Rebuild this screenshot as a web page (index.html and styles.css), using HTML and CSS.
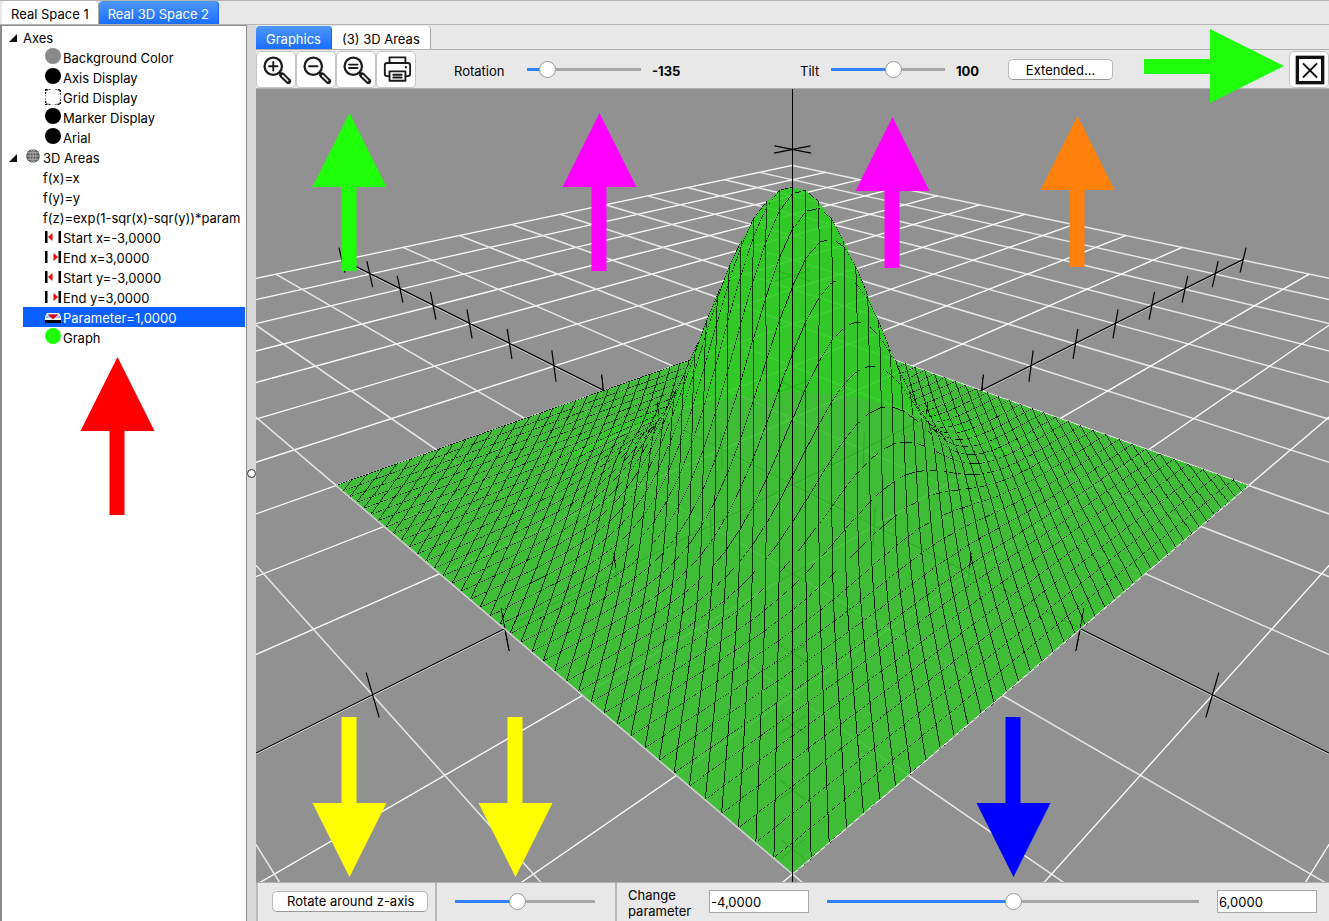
FILE: index.html
```html
<!DOCTYPE html>
<html lang="en">
<head>
<meta charset="utf-8">
<title>Real 3D Space 2</title>
<link rel="stylesheet" href="styles.css">
</head>
<body>
<div class="app">
  <nav class="tabs tabs-main">
    <button class="tab" type="button">Real Space 1</button>
    <button class="tab tab-active" type="button">Real 3D Space 2</button>
  </nav>
  <div class="workspace">
    <aside class="sidebar">
      <ul class="tree">
        <li class="row row-root"><span class="twist"></span>Axes</li>
        <li class="row row-item"><span class="dot dot-gray"></span>Background Color</li>
        <li class="row row-item"><span class="dot"></span>Axis Display</li>
        <li class="row row-item"><svg class="mark" viewBox="0 0 16 16"><rect x=".7" y=".7" width="14.600" height="14.600" fill="none" stroke="#000" stroke-width="1.400" stroke-dasharray="2 1"/><circle cx="8" cy="8" r="7.900" fill="#fff"/></svg>Grid Display</li>
        <li class="row row-item"><span class="dot"></span>Marker Display</li>
        <li class="row row-item"><span class="dot"></span>Arial</li>
        <li class="row row-root"><span class="twist"></span><svg class="globe" viewBox="0 0 14 14"><circle cx="7" cy="7" r="6.800" fill="#555"/><g fill="none" stroke="#bbb" stroke-width=".9"><ellipse cx="7" cy="7" rx="3" ry="6.500"/><path d="M7 0v14M.5 7h13M1.500 3.800h11M1.500 10.200h11"/></g></svg>3D Areas</li>
        <li class="row row-func">f(x)=x</li>
        <li class="row row-func">f(y)=y</li>
        <li class="row row-func">f(z)=exp(1-sqr(x)-sqr(y))*param</li>
        <li class="row row-item"><svg class="mark" viewBox="0 0 16 16"><path d="M0 2h2.500v12H0zM13.500 2H16v12h-2.500z"/><path d="M3 8l4.500-4v8z" fill="#f00"/></svg>Start x=-3,0000</li>
        <li class="row row-item"><svg class="mark" viewBox="0 0 16 16"><path d="M0 2h2.500v12H0zM13.500 2H16v12h-2.500z"/><path d="M13 8L8.500 4v8z" fill="#f00"/></svg>End x=3,0000</li>
        <li class="row row-item"><svg class="mark" viewBox="0 0 16 16"><path d="M0 2h2.500v12H0zM13.500 2H16v12h-2.500z"/><path d="M3 8l4.500-4v8z" fill="#f00"/></svg>Start y=-3,0000</li>
        <li class="row row-item"><svg class="mark" viewBox="0 0 16 16"><path d="M0 2h2.500v12H0zM13.500 2H16v12h-2.500z"/><path d="M13 8L8.500 4v8z" fill="#f00"/></svg>End y=3,0000</li>
        <li class="row row-item row-selected"><svg class="mark" viewBox="0 0 16 16"><path d="M2 4h12l2 4v2H0V8z" fill="#fff"/><path d="M1 8h14M2.500 6h11" stroke="#0a60ff" stroke-width=".8"/><path d="M3 5.500h10L8 10.500z" fill="#e00010"/><path d="M0 11h16v3H0z"/><path d="M0 10.500h16" stroke="#fff"/></svg>Parameter=1,0000</li>
        <li class="row row-item"><span class="dot dot-green"></span>Graph</li>
      </ul>
    </aside>
    <div class="splitter"><span class="grip"></span></div>
    <main class="view">
      <nav class="tabs tabs-view">
        <button class="tab tab-active" type="button">Graphics</button>
        <button class="tab" type="button">(3) 3D Areas</button>
      </nav>
      <div class="toolbar">
        <div class="tools">
          <button class="tool" type="button" aria-label="Zoom in"><svg viewBox="0 0 32 32"><use href="#lens"/><path d="M7.500 12h9M12 7.500v9" class="ink"/></svg></button>
          <button class="tool" type="button" aria-label="Zoom out"><svg viewBox="0 0 32 32"><use href="#lens"/><path d="M7.500 12h9" class="ink"/></svg></button>
          <button class="tool" type="button" aria-label="Reset zoom"><svg viewBox="0 0 32 32"><use href="#lens"/><path d="M7.500 10.200h9M7.500 13.800h9" class="ink"/></svg></button>
          <button class="tool" type="button" aria-label="Print"><svg viewBox="0 0 32 32"><g class="ink"><path d="M8 8.500V2.500h17v6M8 22.500H5.500q-2.500 0-2.500-2.500V11q0-2.500 2.500-2.500h22Q30 8.500 30 11v9q0 2.500-2.500 2.500H25"/><path d="M8 17.500h17v10H8zM12 21h9M12 24h9"/></g><circle cx="25.500" cy="13" r="1.200"/></svg></button>
        </div>
        <label class="field field-rotation" for="rotation">Rotation</label>
        <input class="slider slider-small" id="rotation" type="range" min="-180" max="180" value="-135" style="--fill:17%">
        <output class="value value-rotation" for="rotation">-135</output>
        <label class="field field-tilt" for="tilt">Tilt</label>
        <input class="slider slider-small" id="tilt" type="range" min="0" max="180" value="100" style="--fill:55%">
        <output class="value" for="tilt">100</output>
        <button class="push push-extended" type="button">Extended...</button>
        <button class="tool tool-close" type="button" aria-label="Close view"><svg viewBox="0 0 32 32"><rect x="2.500" y="2.500" width="27" height="27" fill="none" stroke="#111" stroke-width="3.600"/><path d="M8.500 9l15 15M23.500 9l-15 15" fill="none" stroke="#111" stroke-width="2"/></svg></button>
      </div>
      <div class="stage"><canvas class="plot" id="plot" role="img" aria-label="3D graph"></canvas></div>
      <div class="footer">
        <div class="cell cell-rotate"><button class="push push-rotate" type="button">Rotate around z-axis</button></div>
        <div class="cell cell-speed"><input class="slider" aria-label="Rotation speed" type="range" min="0" max="100" value="44" style="--fill:44%"></div>
        <div class="cell cell-param">
          <label class="caption" for="param">Change parameter</label>
          <input class="number" type="text" aria-label="Minimum" value="-4,0000">
          <input class="slider" id="param" type="range" min="-4" max="6" value="1" style="--fill:50%">
          <input class="number" type="text" aria-label="Maximum" value="6,0000">
        </div>
      </div>
    </main>
  </div>
  <svg class="arrows" aria-hidden="true">
    <defs>
      <g id="lens"><circle cx="12" cy="12" r="9.300" fill="none" stroke="#1a1a1a" stroke-width="2.400"/><path d="M18.500 18.500l2.500 2.500" stroke="#1a1a1a" stroke-width="2.500"/><path d="M21.500 21.500l6.500 6.500" stroke="#1a1a1a" stroke-width="6" stroke-linecap="round"/><path d="M22 22l5.500 5.500" stroke="#fff" stroke-width="1.600" stroke-linecap="round"/></g>
      <path id="arrow" d="M0 0L37 74H7V158H-8V74H-37z"/>
      <path id="arrow-short" d="M0 0L37 74H7V151H-8V74H-37z"/>
      <path id="arrow-long" d="M0 0L37 74H7V160H-8V74H-37z"/>
    </defs>
    <use href="#arrow" transform="translate(349.500 113)" fill="#1fff0a"/>
    <use href="#arrow" transform="translate(599.500 113)" fill="#f0f"/>
    <use href="#arrow-short" transform="translate(892.500 117)" fill="#f0f"/>
    <use href="#arrow-short" transform="translate(1077.500 116)" fill="#ff800a"/>
    <use href="#arrow" transform="translate(117.500 357)" fill="#f00"/>
    <use href="#arrow-long" transform="translate(349.500 877) scale(1 -1)" fill="#ff0"/>
    <use href="#arrow-long" transform="translate(515.500 877) scale(1 -1)" fill="#ff0"/>
    <use href="#arrow-long" transform="translate(1013.500 877) scale(1 -1)" fill="#00f"/>
    <path d="M1284 66L1210 29V59H1144V74H1210V103z" fill="#1fff0a"/>
  </svg>
</div>
<script src="plot.js"></script>
</body>
</html>
```
FILE: styles.css
```css
* { box-sizing: border-box; }
body { margin: 0; font: 13px/16px Inter, "Liberation Sans", sans-serif; color: #000; }
button, input { font: inherit; color: inherit; margin: 0; }
.app { position: relative; display: flex; flex-direction: column; height: 100vh; overflow: hidden; background: #e8e8e8; border-top: 1px solid #b4b4b4; }
.tabs { display: flex; height: 24px; flex: none; }
.tabs-main { padding-left: 2px; border-bottom: 1px solid #b4b4b4; }
.tab { height: 23px; padding: 3px 9px 0; border: 0; border-right: 1px solid #a8a8a8; border-radius: 4px 4px 0 0; background: #fff; white-space: nowrap; }
.tab-active { color: #fff; background: linear-gradient(#4e97fa, #1a6eff); border-right-color: #1763e6; }
.workspace { display: flex; flex: 1; min-height: 0; }
.sidebar { width: 247px; flex: none; background: #fff; border: 1px solid #8c8c8c; border-width: 1px 1px 0 2px; }
.tree { list-style: none; margin: 0; padding: 1px 1px 0 7px; }
.row { display: flex; align-items: center; height: 20px; padding-top: 2px; white-space: nowrap; }
.row-root { gap: 3px; }
.row-item { margin-left: 14px; padding-left: 22px; gap: 2px; }
.row-func { padding-left: 34px; }
.row-selected { background: #0a60ff; color: #fff; }
.twist { width: 8px; height: 8px; margin-right: 3px; background: #111; clip-path: polygon(100% 0, 100% 100%, 0 100%); }
.dot { width: 16px; height: 16px; border-radius: 50%; background: #000; margin-top: -4px; }
.dot-gray { background: #888; }
.dot-green { background: #1fff0a; }
.mark { width: 16px; height: 16px; margin-top: -3px; }
.globe { width: 14px; height: 14px; margin: -4px 0 0 3px; }
.splitter { display: flex; align-items: center; width: 9px; flex: none; background: #d8d8d8; }
.grip { width: 9px; height: 9px; border: 1px solid #333; border-radius: 50%; background: #fff; }
.view { display: flex; flex-direction: column; flex: 1; min-width: 0; }
.tabs-view { height: 25px; padding-top: 1px; border-bottom: 1px solid #b0b0b0; }
.tabs-view .tab { padding: 2px 10px 0; }
.toolbar { display: flex; align-items: center; height: 39px; flex: none; padding-top: 1px; border-bottom: 1px solid #b0b0b0; }
.tools { display: flex; align-self: flex-start; }
.tool { width: 40px; height: 37px; padding: 2px 5px; border: 1px solid #c4c4c4; border-radius: 5px; background: #fff; }
.tool svg { display: block; width: 30px; height: 30px; }
.tool-close { margin-left: auto; align-self: flex-start; }
.ink { fill: none; stroke: #1a1a1a; stroke-width: 2; stroke-linecap: round; stroke-linejoin: round; }
.field { margin-top: 2px; }
.field-rotation { width: 73px; margin-left: 38px; }
.field-tilt { width: 31px; }
.value { margin: 2px 0 0 11px; width: 52px; font-weight: 700; }
.value-rotation { width: 148px; }
.push { height: 21px; padding: 0 14px; border: 1px solid #b8b8b8; border-bottom-color: #999; border-radius: 5px; background: #fff; white-space: nowrap; }
.push-extended { width: 105px; }
.slider { appearance: none; height: 18px; min-width: 0; background: linear-gradient(90deg, #2f81ff var(--fill), #a6a6a6 var(--fill)) center / 100% 3px no-repeat; }
.slider-small { width: 114px; }
.slider::-webkit-slider-thumb { appearance: none; width: 17px; height: 17px; border: 1px solid #999; border-radius: 50%; background: #fff; }
.stage { position: relative; flex: 1; min-height: 0; background: #919191; }
.plot { position: absolute; inset: 0; width: 100%; height: 100%; }
.footer { display: flex; height: 39px; flex: none; border-top: 1px solid #b0b0b0; }
.cell { display: flex; align-items: center; padding-bottom: 2px; border-left: 2px solid #b8b8b8; }
.cell-rotate { width: 179px; padding-left: 14px; }
.cell-speed { width: 180px; padding-right: 20px; padding-left: 18px; }
.cell-speed .slider { width: 140px; }
.cell-param { flex: 1; padding-right: 12px; padding-left: 11px; gap: 18px; }
.cell-param .slider { flex: 1; }
.push-rotate { width: 156px; }
.caption { width: 63px; margin-top: 4px; }
.number { width: 100px; height: 23px; padding: 2px 1px 0; border: 1px solid #a8a8a8; background: #fff; }
.arrows { position: absolute; left: 0; top: -1px; width: 100%; height: calc(100% + 1px); pointer-events: none; }
```
FILE: plot.js
```js
(function () {
  const canvas = document.getElementById('plot');
  const W = canvas.width = canvas.parentElement.clientWidth;
  const H = canvas.height = canvas.parentElement.clientHeight;
  const ctx = canvas.getContext('2d');
  const DIST = 8.9, SIN = 0.5, COS = Math.sqrt(3) / 2, R2 = Math.SQRT2;
  const focal = H / 2 / Math.tan(Math.PI / 8);
  const BG = 145, ALPHA = 0.88;

  // a runs down-left, b runs down-right, z runs up
  function project(a, b, z) {
    const s = (a + b) / R2, d = (b - a) / R2;
    const depth = DIST - s * COS - z * SIN;
    return [W / 2 + focal * d / depth, H / 2 - focal * (z * COS - s * SIN) / depth, 1 / depth];
  }

  function line(p, q, color, width, lift = 0) {
    const NEAR = 0.8;
    const dp = DIST - (p[0] + p[1]) / R2 * COS - p[2] * SIN;
    const dq = DIST - (q[0] + q[1]) / R2 * COS - q[2] * SIN;
    if (dp < NEAR && dq < NEAR) return;
    const cut = (u, v, du, dv) => {
      const t = (NEAR - du) / (dv - du);
      return u.map((x, i) => x + (v[i] - x) * t);
    };
    if (dp < NEAR) p = cut(p, q, dp, dq);
    else if (dq < NEAR) q = cut(p, q, dp, dq);
    const P = project(...p), Q = project(...q);
    ctx.strokeStyle = color;
    ctx.lineWidth = width;
    ctx.beginPath();
    ctx.moveTo(P[0], P[1] - lift);
    ctx.lineTo(Q[0], Q[1] - lift);
    ctx.stroke();
  }

  ctx.fillStyle = 'rgb(145,145,145)';
  ctx.fillRect(0, 0, W, H);
  for (let i = -10; i <= 10; i++) {
    line([-10, i, 0], [10, i, 0], '#fff', 1.3);
    line([i, -10, 0], [i, 10, 0], '#e8e8e8', 1.5);
  }
  line([-10, 0, 0], [10, 0, 0], '#000', 1.2, 0.6);
  line([0, -10, 0], [0, 10, 0], '#000', 1.2, 0.6);
  for (let i = -10; i <= 10; i++) {
    if (i === 0) continue;
    line([i, 0, -0.2], [i, 0, 0.2], '#000', 1.2);
    line([0, i, -0.2], [0, i, 0.2], '#000', 1.2);
    if (i < 4) {
      line([-0.2, 0, i], [0.2, 0, i], '#000', 1.2);
      line([0, -0.2, i], [0, 0.2, i], '#000', 1.2);
    }
  }

  // Surface, rasterised with a depth buffer
  const image = ctx.getImageData(0, 0, W, H), px = image.data;
  const under = px.slice();
  const zbuf = new Float64Array(W * H);
  const solid = c => c.map(v => (v - (1 - ALPHA) * BG) / ALPHA);
  const LOW = solid([63, 189, 55]), HIGH = solid([50, 200, 40]);
  const horizon = x => H * 0.382 + Math.pow((x - W / 2) / 100, 2) * 14;

  function triangle(A, B, C, hill) {
    const x0 = Math.max(0, Math.floor(Math.min(A[0], B[0], C[0])));
    const x1 = Math.min(W - 1, Math.ceil(Math.max(A[0], B[0], C[0])));
    const y0 = Math.max(0, Math.floor(Math.min(A[1], B[1], C[1])));
    const y1 = Math.min(H - 1, Math.ceil(Math.max(A[1], B[1], C[1])));
    const det = (B[1] - C[1]) * (A[0] - C[0]) + (C[0] - B[0]) * (A[1] - C[1]);
    if (!det) return;
    for (let y = y0; y <= y1; y++) for (let x = x0; x <= x1; x++) {
      const fx = x + 0.5 - C[0], fy = y + 0.5 - C[1];
      const u = ((B[1] - C[1]) * fx + (C[0] - B[0]) * fy) / det;
      const v = ((C[1] - A[1]) * fx + (A[0] - C[0]) * fy) / det;
      if (u < -1e-9 || v < -1e-9 || u + v > 1 + 1e-9) continue;
      const w = u * A[2] + v * B[2] + (1 - u - v) * C[2], k = y * W + x;
      if (w <= zbuf[k]) continue;
      zbuf[k] = w;
      const c = hill && y < horizon(x) ? HIGH : LOW;
      for (let j = 0; j < 3; j++) px[k * 4 + j] = c[j] * ALPHA + under[k * 4 + j] * (1 - ALPHA);
    }
  }

  function edge(A, B, bias, color, alpha) {
    const n = Math.ceil(Math.max(Math.abs(B[0] - A[0]), Math.abs(B[1] - A[1]), 1));
    for (let i = 0; i < n; i++) {
      const t = i / n;
      const x = Math.floor(A[0] + (B[0] - A[0]) * t), y = Math.floor(A[1] + (B[1] - A[1]) * t);
      if (x < 0 || y < 0 || x >= W || y >= H) continue;
      const k = y * W + x;
      if (A[2] + (B[2] - A[2]) * t < zbuf[k] - bias) continue;
      for (let j = 0; j < 3; j++) px[k * 4 + j] = px[k * 4 + j] * (1 - alpha) + color[j] * alpha;
    }
  }

  const N = 41, f = (a, b) => Math.exp(1 - a * a - b * b);
  const pts = [], zs = [];
  for (let i = 0; i <= N; i++) {
    pts.push([]); zs.push([]);
    for (let j = 0; j <= N; j++) {
      const a = -3 + 6 * i / N, b = -3 + 6 * j / N;
      zs[i].push(f(a, b));
      pts[i].push(project(a, b, f(a, b)));
    }
  }
  for (let i = 0; i < N; i++) for (let j = 0; j < N; j++) {
    const hill = zs[i][j] > 0.02;
    triangle(pts[i][j], pts[i + 1][j], pts[i + 1][j + 1], hill);
    triangle(pts[i][j], pts[i + 1][j + 1], pts[i][j + 1], hill);
  }
  for (let i = 0; i <= N; i++) for (let j = 0; j <= N; j++) {
    if (i < N) edge(pts[i][j], pts[i + 1][j], 0.00001, [0, 10, 0], 0.95);
    if (i < N && j < N) {
      const near = pts[i][j][1] > H * 0.6;
      edge(pts[i][j], pts[i + 1][j + 1], 0.0002, [0, 10, 0], near ? 0.88 : 0.76);
    }
  }
  // Upper halves of the markers that rise out of the surface
  for (let i = -3; i <= 3; i++) {
    if (!i) continue;
    edge(project(i, 0, -0.2), project(i, 0, 0.2), 0, [0, 0, 0], 0.9);
    edge(project(0, i, -0.2), project(0, i, 0.2), 0, [0, 0, 0], 0.9);
  }
  ctx.putImageData(image, 0, 0);

  line([3, -3, 0], [3, 3, 0], '#ccc', 1.3);
  line([-3, 3, 0], [3, 3, 0], '#fff', 1);
  ctx.fillStyle = '#000';
  ctx.fillRect(Math.floor(W / 2), 0, 1, H);
})();
```
